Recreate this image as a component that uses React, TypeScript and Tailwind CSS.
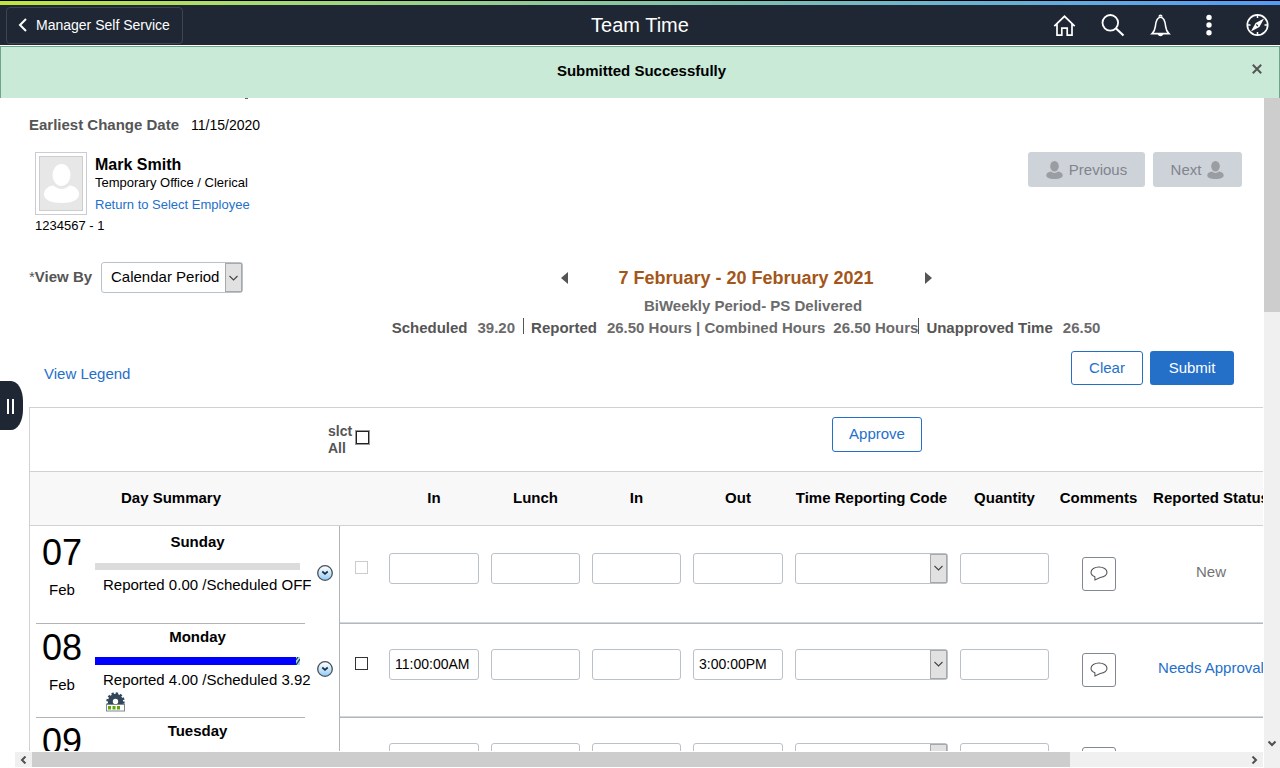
import { useState } from 'react'
import type { ReactNode } from 'react'

interface Day {
  date: string
  month: string
  name: string
  summary: string
  bar: 'none' | 'full'
  selectable: boolean
  times: [string, string, string, string]
  status: string
  statusLink: boolean
}

const days: Day[] = [
  {
    date: '07',
    month: 'Feb',
    name: 'Sunday',
    summary: 'Reported 0.00 /Scheduled OFF',
    bar: 'none',
    selectable: false,
    times: ['', '', '', ''],
    status: 'New',
    statusLink: false,
  },
  {
    date: '08',
    month: 'Feb',
    name: 'Monday',
    summary: 'Reported 4.00 /Scheduled 3.92',
    bar: 'full',
    selectable: true,
    times: ['11:00:00AM', '', '', '3:00:00PM'],
    status: 'Needs Approval',
    statusLink: true,
  },
  {
    date: '09',
    month: '',
    name: 'Tuesday',
    summary: '',
    bar: 'none',
    selectable: true,
    times: ['', '', '', ''],
    status: '',
    statusLink: false,
  },
]

const timeColumns = ['In', 'Lunch', 'In', 'Out']

function HomeIcon() {
  return (
    <svg width="24" height="24" viewBox="0 0 24 24" fill="none" stroke="white" strokeWidth="1.7">
      <path d="M1.300 13.200 11.500 3.300l10.200 9.900M4 11v11.100h4.800v-7h5.400v7H19V11" />
    </svg>
  )
}

function SearchIcon() {
  return (
    <svg width="24" height="24" viewBox="0 0 24 24" fill="none" stroke="white" strokeWidth="1.800">
      <circle cx="9.300" cy="9.800" r="7.800" />
      <path d="m14.800 15.200 7.700 7.300" strokeWidth="2.200" />
    </svg>
  )
}

function BellIcon() {
  return (
    <svg width="24" height="24" viewBox="0 0 24 24" fill="none" stroke="white" strokeWidth="1.600">
      <path d="M3.100 20.600c2.200-2 2.800-3.600 3.200-7C6.900 7.800 8 4.300 11.500 4.300s4.600 3.500 5.200 9.300c.4 3.400 1 5 3.200 7z" />
      <path d="M10.200 3.700c0-2 2.600-2 2.600 0" />
      <path d="M9.600 21.300c.6 1.600 3.200 1.600 3.800 0z" fill="white" />
    </svg>
  )
}

function DotsIcon() {
  return (
    <svg width="24" height="24" viewBox="0 0 24 24" fill="white">
      <circle cx="12" cy="4.400" r="2.700" />
      <circle cx="12" cy="12" r="2.700" />
      <circle cx="12" cy="19.700" r="2.700" />
    </svg>
  )
}

function CompassIcon() {
  return (
    <svg width="24" height="24" viewBox="0 0 24 24" fill="none" stroke="white" strokeWidth="1.700">
      <circle cx="12.500" cy="12" r="10.200" />
      <path d="M12.500 2v3M12.500 19v3M2.500 12h3M19.500 12h3" strokeWidth="1.500" />
      <path d="M19.100 5.400 14.400 14 5.900 18.600 10.600 10z" fill="white" stroke="none" />
      <path d="m11.300 11.500 1.600 1.600" stroke="#1e2733" strokeWidth="1.200" />
    </svg>
  )
}

function PersonIcon() {
  return (
    <svg width="17" height="18" viewBox="0 0 17 18" fill="#9a9da1">
      <ellipse cx="8.500" cy="5.300" rx="4.300" ry="5.300" />
      <path d="M.3 14.500c0-2.500 2-3.600 4.700-3.900 1.800 1.700 5.200 1.700 7 0 2.700.3 4.700 1.400 4.700 3.900 0 2.200-3.200 3.500-8.200 3.500S.3 16.700.3 14.500z" />
    </svg>
  )
}

function Avatar() {
  return (
    <div className="flex h-[63px] w-[52px] items-center justify-center border border-[#c9ccd3]">
      <svg width="44" height="55" viewBox="0 0 44 55">
        <rect x=".5" y=".5" width="43" height="54" fill="#e7e7e7" stroke="#cdcdcd" />
        <ellipse cx="22.500" cy="19" rx="9" ry="11" fill="white" />
        <path
          d="M5 38.500c0-5.500 4.500-8.500 9.500-9 4.500 4.500 11.500 4.500 16 0 5 .5 9.500 3.500 9.500 9 0 5-7 8.500-17.500 8.500S5 43.500 5 38.500z"
          fill="white"
        />
      </svg>
    </div>
  )
}

function ExpandIcon() {
  return (
    <svg width="16" height="16" viewBox="0 0 16 16">
      <defs>
        <linearGradient id="expandFill" x1="0" y1="0" x2="0" y2="1">
          <stop offset="0.15" stopColor="#f4faff" />
          <stop offset="1" stopColor="#8fcbf8" />
        </linearGradient>
      </defs>
      <circle cx="8" cy="8" r="7.300" fill="url(#expandFill)" stroke="#4a5157" strokeWidth="1.300" />
      <path d="m5.300 6.500 2.700 2.300 2.700-2.300" fill="none" stroke="#1c2a38" strokeWidth="1.700" />
    </svg>
  )
}

function GearIcon() {
  return (
    <svg width="19" height="20" viewBox="0 0 19 20">
      <circle cx="9.500" cy="9.500" r="5.200" fill="none" stroke="#33475b" strokeWidth="5" />
      <circle cx="9.500" cy="9.500" r="8" fill="none" stroke="#33475b" strokeWidth="2.400" strokeDasharray="2.300 1.890" />
      <rect x=".5" y="12.500" width="18" height="6.500" fill="white" stroke="#7d8790" />
      <path d="M2 14h3v3.500H2zM6.500 14h3v3.500h-3zM11 14h3v3.500h-3z" fill="#5fa80a" />
    </svg>
  )
}

function CommentIcon() {
  return (
    <svg width="18" height="15" viewBox="0 0 18 15" fill="none" stroke="#555" strokeWidth="1.100">
      <path d="M4.800 10.700C2.400 9.800 1 8.100 1 6.300 1 3.300 4.600 1 9 1s8 2.300 8 5.300c0 2.600-3 4.700-6.800 5.200L5 13.900z" />
    </svg>
  )
}

function SelectBox({ id, label, children }: { id: string; label?: string; children: ReactNode }) {
  return (
    <span className="relative block">
      <select
        id={id}
        aria-label={label}
        className="block h-[31px] w-full appearance-none rounded-[3px] border border-[#b9c1cb] bg-white pr-5 pb-0.5 pl-[9px] text-[15px] text-black"
      >
        {children}
      </select>
      <span className="pointer-events-none absolute inset-y-px right-px flex w-[17px] items-center justify-center border border-[#a6a8ab] bg-[#e1e1e1]">
        <svg width="9" height="6" viewBox="0 0 9 6" fill="none" stroke="#444" strokeWidth="1.100">
          <path d="m.5 1 4 4 4-4" />
        </svg>
      </span>
    </span>
  )
}

function Header() {
  return (
    <header className="shrink-0">
      <div className="h-px bg-black" />
      <div className="h-1 bg-linear-to-r from-[#bfe63c] via-[#86c5a2] to-[#559af7]" />
      <div className="grid h-10 grid-cols-[1fr_auto_1fr] items-center bg-[#1e2733] text-white">
        <div className="pl-1.5">
          <button className="flex h-[37px] items-center gap-2 rounded border border-[#3c4552] pr-3 pl-2.5 text-sm">
            <svg width="11" height="14" viewBox="0 0 11 14" fill="none" stroke="white" strokeWidth="2">
              <path d="M9 1 3 7l6 6" />
            </svg>
            Manager Self Service
          </button>
        </div>
        <h1 className="text-xl">Team Time</h1>
        <nav className="flex justify-end gap-6 pr-[11px]">
          <button aria-label="Home"><HomeIcon /></button>
          <button aria-label="Search"><SearchIcon /></button>
          <button aria-label="Notifications"><BellIcon /></button>
          <button aria-label="Actions"><DotsIcon /></button>
          <button aria-label="NavBar"><CompassIcon /></button>
        </nav>
      </div>
    </header>
  )
}

function Banner({ onClose }: { onClose: () => void }) {
  return (
    <div className="mt-px flex h-[52px] shrink-0 items-center border border-b-0 border-[#6fa58a] bg-[#c8ead7] pr-[15px] pb-[3px]">
      <p className="flex-1 pl-8 text-center text-[15px] font-bold">Submitted Successfully</p>
      <button aria-label="Close" onClick={onClose} className="mb-1 p-0.5">
        <svg width="10" height="10" viewBox="0 0 10 10" stroke="#555" strokeWidth="2">
          <path d="m.8.8 8.400 8.400M9.200.8.8 9.200" />
        </svg>
      </button>
    </div>
  )
}

function DayRow({ day, index }: { day: Day; index: number }) {
  const first = index === 0
  const cell = 'border-b border-[#b1b8c0] p-0 px-1.5 align-middle shadow-[inset_0_-1px_0_#d3d7dc]'

  return (
    <tr>
      <td className="border-r border-[#b4b4b4] p-0">
        <div className={`flex ${first ? 'h-[98px]' : 'h-[94px]'}`}>
          <div className={`ml-1.5 flex w-[269px] shrink-0 border-b border-[#b4b4b4] ${first ? 'pt-1.5' : 'pt-[3px]'}`}>
            <div className="w-[52px] text-center">
              <div className="pt-px text-4xl/10">{day.date}</div>
              <div className="pt-[7px] text-[15px]/5">{day.month}</div>
            </div>
            <div className="ml-[7px] w-[205px]">
              <div className="text-center text-[15px]/5 font-bold">{day.name}</div>
              {day.bar === 'full' ? (
                <div className="mt-2.5 flex h-2">
                  <div className="flex-1 bg-[#0000ff]" />
                  <svg width="4" height="8" viewBox="0 0 4 8">
                    <rect width="4" height="8" fill="#a9d8e8" />
                    <path d="M0 8 4 2M0 3 2 0" stroke="#234a5c" strokeWidth="1.300" />
                  </svg>
                </div>
              ) : (
                <div className="mt-[11px] h-[7px] bg-[#dcdcdc]" />
              )}
              <div className="pt-[5px] pl-2 text-[15px]/5 whitespace-nowrap">{day.summary}</div>
              {day.bar === 'full' && (
                <div className="mt-0.5 pl-[11px]">
                  <GearIcon />
                </div>
              )}
            </div>
          </div>
          <button aria-label={`Expand ${day.name}`} className="ml-3 self-center pb-1">
            <ExpandIcon />
          </button>
        </div>
      </td>
      <td className={cell}>
        <input
          type="checkbox"
          aria-label={`Select ${day.name}`}
          disabled={!day.selectable}
          className="mb-[15px] ml-[9px] block size-[13px] appearance-none border border-[#333] bg-white checked:bg-[#333] disabled:border-[#ccc]"
        />
      </td>
      {timeColumns.map((column, i) => (
        <td key={i} className={cell}>
          <input
            type="text"
            aria-label={`${day.name} ${column}`}
            defaultValue={day.times[i]}
            className="mb-[13px] block h-[31px] w-full rounded-[3px] border border-[#b9c1cb] px-[5px] text-sm"
          />
        </td>
      ))}
      <td className={cell}>
        <div className="mb-[13px]">
          <SelectBox id={`trc-${index}`} label={`${day.name} Time Reporting Code`}>
            <option></option>
          </SelectBox>
        </div>
      </td>
      <td className={cell}>
        <input
          type="text"
          aria-label={`${day.name} Quantity`}
          className="mb-[13px] block h-[31px] w-full rounded-[3px] border border-[#b9c1cb] px-[5px] text-sm"
        />
      </td>
      <td className={cell}>
        <button
          aria-label={`${day.name} Comments`}
          className="mx-auto mb-0.5 flex size-[34px] items-center justify-center rounded-[3px] border border-[#7f8893]"
        >
          <CommentIcon />
        </button>
      </td>
      <td className={`${cell} text-center text-[15px] whitespace-nowrap`}>
        <div className="pb-1.5">
          {day.statusLink ? (
            <a href="#status" className="text-[#2470c9]">{day.status}</a>
          ) : (
            <span className="text-[#737373]">{day.status}</span>
          )}
        </div>
      </td>
    </tr>
  )
}

function Timesheet() {
  return (
    <section className="mt-[22px] ml-[29px] w-[1251px] border-t border-l border-[#cfd2d5]">
      <div className="flex h-[63px] items-start pl-[298px]">
        <label htmlFor="select-all" className="w-[27px] pt-[15px] text-sm/[17px] font-bold text-[#555]">
          slct All
        </label>
        <input
          id="select-all"
          type="checkbox"
          className="mt-[23px] mr-px ml-px size-[13px] appearance-none border border-[#222] bg-white outline outline-[#999] checked:bg-[#555]"
        />
        <button className="mt-[9px] ml-[462px] h-[35px] w-[90px] rounded-[3px] border border-[#2470c9] pb-0.5 text-[15px] text-[#2470c9]">
          Approve
        </button>
      </div>
      <table className="w-full table-fixed border-separate border-spacing-0">
        <colgroup>
          <col className="w-[310px]" />
          <col className="w-[43px]" />
          <col className="w-[102px]" />
          <col className="w-[101px]" />
          <col className="w-[101px]" />
          <col className="w-[102px]" />
          <col className="w-[165px]" />
          <col className="w-[101px]" />
          <col className="w-[87px]" />
          <col className="w-[138px]" />
        </colgroup>
        <thead>
          <tr className="h-[55px] bg-[#f8f8f8] text-[15px] whitespace-nowrap *:border-y *:border-[#cfd2d5] *:p-0 *:pb-0.5">
            <th className="!pr-7">Day Summary</th>
            <td></td>
            {timeColumns.map((column, i) => (
              <th key={i}>{column}</th>
            ))}
            <th>Time Reporting Code</th>
            <th>Quantity</th>
            <th>Comments</th>
            <th>Reported Status</th>
          </tr>
        </thead>
        <tbody>
          {days.map((day, i) => (
            <DayRow key={day.date} day={day} index={i} />
          ))}
        </tbody>
      </table>
    </section>
  )
}

export default function App() {
  const [showBanner, setShowBanner] = useState(true)

  return (
    <div className="flex h-screen flex-col overflow-hidden bg-white font-['Liberation_Sans',Arial,sans-serif] text-[15px]/5 text-black">
      <Header />
      {showBanner && <Banner onClose={() => setShowBanner(false)} />}

      <div className="flex min-h-0 flex-1">
        <div className="flex min-w-0 flex-1 flex-col">
          <main className="mr-px mb-px min-h-0 flex-1 overflow-hidden">
            <div className="ml-[245px] h-px w-[3px] bg-[#666]" />
            <div className="flex gap-3 pt-4 pl-[29px]">
              <span className="font-bold text-[#555]">Earliest Change Date</span>
              <span className="text-sm/5">11/15/2020</span>
            </div>

            <section className="mt-[17px] flex items-start justify-between pr-[21px] pl-[35px]">
              <div>
                <div className="flex gap-2">
                  <Avatar />
                  <div className="text-[13px]/4">
                    <h2 className="pt-[3px] text-base/5 font-bold">Mark Smith</h2>
                    <p>Temporary Office / Clerical</p>
                    <a href="#select" className="mt-1.5 block text-[#2470c9]">Return to Select Employee</a>
                  </div>
                </div>
                <p className="mt-[3px] text-[13px]/4">1234567 - 1</p>
              </div>
              <div className="flex gap-2 text-[15px] text-[#80858c]">
                <button disabled className="flex h-[35px] w-[117px] items-center justify-center gap-1.5 rounded-[3px] bg-[#ced3da]">
                  <PersonIcon />
                  Previous
                </button>
                <button disabled className="flex h-[35px] w-[89px] items-center justify-center gap-1.5 rounded-[3px] bg-[#ced3da]">
                  Next
                  <PersonIcon />
                </button>
              </div>
            </section>

            <section className="mt-7 flex items-start pl-[29px]">
              <div className="flex items-center">
                <label htmlFor="view-by" className="w-[72px] pb-0.5 font-bold text-[#555]">
                  <span className="font-normal">*</span>View By
                </label>
                <div className="w-[142px]">
                  <SelectBox id="view-by">
                    <option>Calendar Period</option>
                  </SelectBox>
                </div>
              </div>
              <div className="flex-1 pt-[5px] text-center font-bold text-[#6b6b6b]">
                <div className="flex items-center justify-center pr-3.5">
                  <button aria-label="Previous period">
                    <svg width="7" height="12" viewBox="0 0 7 12" fill="#555"><path d="M7 0v12L0 6z" /></svg>
                  </button>
                  <h2 className="w-[357px] text-lg/[22px] text-[#a3561a]">7 February - 20 February 2021</h2>
                  <button aria-label="Next period">
                    <svg width="7" height="12" viewBox="0 0 7 12" fill="#555"><path d="M0 0v12l7-6z" /></svg>
                  </button>
                </div>
                <p className="mt-[7px]">BiWeekly Period- PS Delivered</p>
                <div className="mt-0.5 flex justify-center pr-3.5 whitespace-nowrap">
                  <span className="mr-2.5 text-[#555]">Scheduled</span>
                  <span className="mr-2">39.20</span>
                  <span className="mr-[7px] h-4 w-px bg-[#555]" />
                  <span className="mr-2.5 text-[#555]">Reported</span>
                  <span className="mr-2">26.50 Hours | Combined Hours</span>
                  <span>26.50 Hours</span>
                  <span className="mr-[7px] h-4 w-px bg-[#555]" />
                  <span className="mr-2.5 text-[#555]">Unapproved Time</span>
                  <span>26.50</span>
                </div>
              </div>
            </section>

            <div className="mt-[13px] flex items-center pr-[29px] pl-11">
              <a href="#legend" className="mt-3 text-[#2470c9]">View Legend</a>
              <button className="ml-auto h-[34px] w-[72px] rounded-[3px] border border-[#2470c9] text-[#2470c9]">
                Clear
              </button>
              <button className="ml-[7px] h-[34px] w-[84px] rounded-[3px] bg-[#2470c9] text-white">Submit</button>
            </div>

            <Timesheet />
          </main>

          {/* horizontal scroll bar */}
          <div className="mr-px mb-px ml-[15px] flex h-[15px] items-center bg-[#f0f0f0]">
            <div className="flex w-[17px] justify-center">
              <svg width="7" height="8" viewBox="0 0 7 8" fill="none" stroke="#505050" strokeWidth="2">
                <path d="M5.500.5 2 4l3.500 3.500" />
              </svg>
            </div>
            <div className="flex-1">
              <div className="h-[15px] w-[85.5%] bg-[#cdcdcd]" />
            </div>
            <div className="flex w-[17px] justify-center">
              <svg width="7" height="8" viewBox="0 0 7 8" fill="none" stroke="#505050" strokeWidth="2">
                <path d="M1.500.5 5 4 1.500 7.500" />
              </svg>
            </div>
          </div>
        </div>

        {/* vertical scroll bar */}
        <div className="flex w-4 flex-col items-center bg-[#f0f0f0]">
          <div className="h-[214px] w-full bg-[#cdcdcd]" />
          <svg className="mt-auto mb-[21px]" width="8" height="7" viewBox="0 0 8 7" fill="none" stroke="#505050" strokeWidth="2">
            <path d="M.5 1.500 4 5l3.500-3.500" />
          </svg>
        </div>
      </div>

      <button
        aria-label="Open side panel"
        className="absolute top-[381px] left-0 flex h-[49px] w-[23px] items-center gap-[3px] rounded-r-[12px_20px] bg-[#1e2733] pt-0.5 pl-[7px]"
      >
        <span className="h-[15px] w-0.5 bg-white" />
        <span className="h-[15px] w-0.5 bg-white" />
      </button>
    </div>
  )
}
